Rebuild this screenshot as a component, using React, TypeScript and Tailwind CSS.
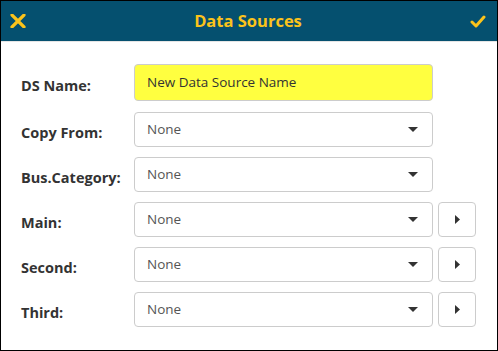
import React from "react";

const font = { fontFamily: '"Open Sans", "Noto Sans", Arial, sans-serif' };

function Caret() {
  return (
    <svg width="10" height="6" viewBox="0 0 10 6" className="absolute right-[14px] top-1/2 -translate-y-1/2">
      <path d="M0 0 L10 0 L5 5 Z" fill="#333" />
    </svg>
  );
}

function SelectBox({ withButton }: { withButton?: boolean }) {
  return (
    <div className="flex gap-[5px]">
      <div className="relative w-[299px] h-[35px] rounded-[4px] border border-[#cccccc] bg-white flex items-center pl-[12px] text-[13.5px] text-[#555]">
        None
        <Caret />
      </div>
      {withButton && (
        <div className="w-[38px] h-[35px] rounded-[4px] border border-[#cccccc] bg-white flex items-center justify-center">
          <svg width="5" height="9" viewBox="0 0 5 9">
            <path d="M0 0 L5 4.5 L0 9 Z" fill="#333" />
          </svg>
        </div>
      )}
    </div>
  );
}

function Row({ label, children, mt }: { label: string; children: React.ReactNode; mt: string }) {
  return (
    <div className={`flex items-center ${mt}`}>
      <div className="w-[113px] pt-[7px] text-[14.5px] font-bold text-[#333]">{label}</div>
      {children}
    </div>
  );
}

export default function App() {
  return (
    <div style={font} className="w-[498px] h-[351px] border border-black bg-white box-border flex flex-col">
      <div className="h-[40px] bg-[#05506f] flex items-center justify-between px-[9px] border-b border-[#e5e5e5] box-content">
        <svg width="16" height="14" viewBox="0 0 16 14">
          <path d="M2 1 L14 13 M14 1 L2 13" stroke="#fbc31b" strokeWidth="3.2" strokeLinecap="round" />
        </svg>
        <div className="text-[16.5px] font-bold text-[#fbc31b]">Data Sources</div>
        <svg width="16" height="13" viewBox="0 0 16 13" className="mr-[2px]">
          <path d="M2 7 L6 11 L14 2" stroke="#fbc31b" strokeWidth="3" strokeLinecap="round" strokeLinejoin="round" fill="none" />
        </svg>
      </div>
      <div className="pl-[20px] pt-[22px]">
        <Row label="DS Name:" mt="mt-0">
          <div className="w-[299px] h-[37px] rounded-[4px] border border-[#cccccc] bg-[#ffff40] flex items-center pl-[12px] text-[13.5px] text-[#333]">
            New Data Source Name
          </div>
        </Row>
        <Row label="Copy From:" mt="mt-[11px]">
          <SelectBox />
        </Row>
        <Row label="Bus.Category:" mt="mt-[10px]">
          <SelectBox />
        </Row>
        <Row label="Main:" mt="mt-[10px]">
          <SelectBox withButton />
        </Row>
        <Row label="Second:" mt="mt-[10px]">
          <SelectBox withButton />
        </Row>
        <Row label="Third:" mt="mt-[10px]">
          <SelectBox withButton />
        </Row>
      </div>
    </div>
  );
}
